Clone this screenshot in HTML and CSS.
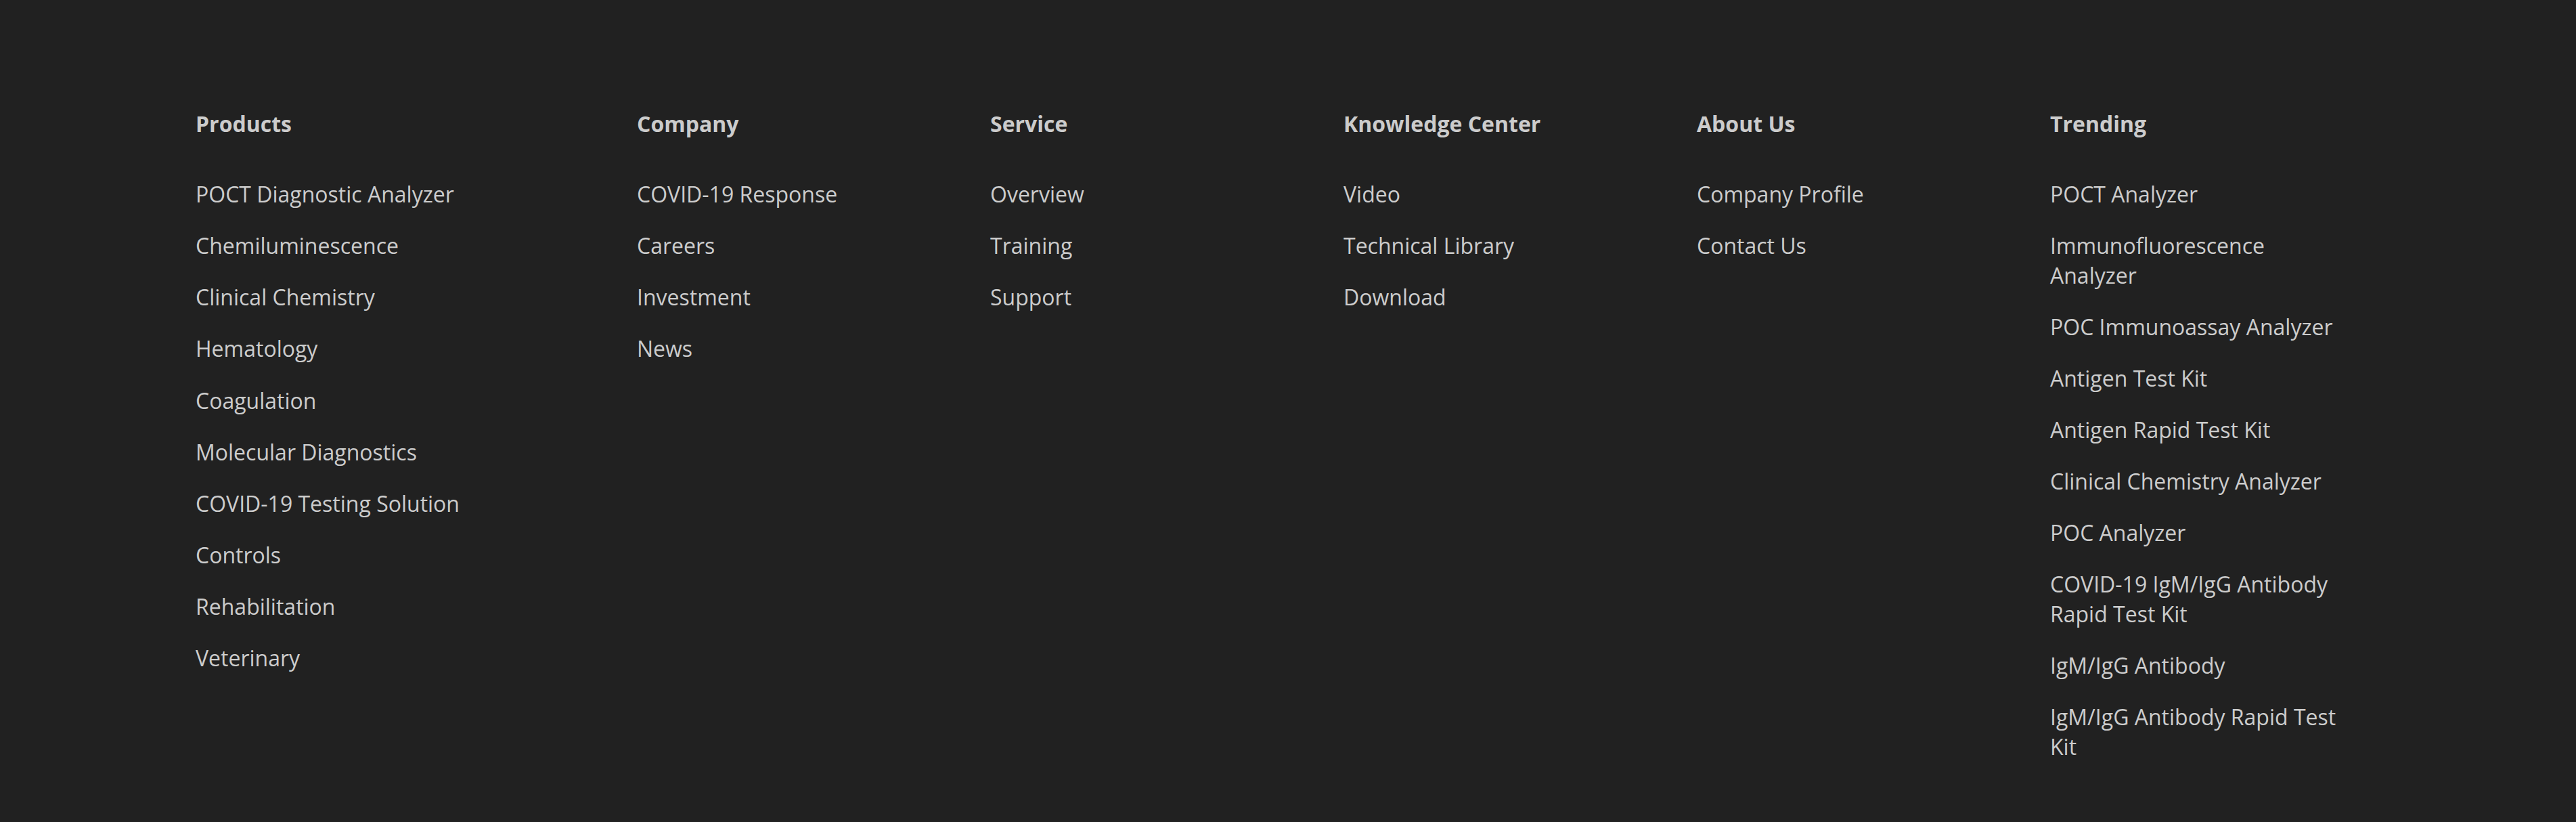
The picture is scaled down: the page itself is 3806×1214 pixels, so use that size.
FILE: index.html
```html
<!DOCTYPE html>
<html lang="en">
<head>
<meta charset="utf-8">
<title>Footer</title>
<link rel="stylesheet" href="styles.css">
</head>
<body>
<footer class="footer">
  <div class="footer-grid">
    <section class="col">
      <h3 class="col-title">Products</h3>
      <ul class="links">
        <li><a href="#">POCT Diagnostic Analyzer</a></li>
        <li><a href="#">Chemiluminescence</a></li>
        <li><a href="#">Clinical Chemistry</a></li>
        <li><a href="#">Hematology</a></li>
        <li><a href="#">Coagulation</a></li>
        <li><a href="#">Molecular Diagnostics</a></li>
        <li><a href="#">COVID-19 Testing Solution</a></li>
        <li><a href="#">Controls</a></li>
        <li><a href="#">Rehabilitation</a></li>
        <li><a href="#">Veterinary</a></li>
      </ul>
    </section>
    <section class="col">
      <h3 class="col-title">Company</h3>
      <ul class="links">
        <li><a href="#">COVID-19 Response</a></li>
        <li><a href="#">Careers</a></li>
        <li><a href="#">Investment</a></li>
        <li><a href="#">News</a></li>
      </ul>
    </section>
    <section class="col">
      <h3 class="col-title">Service</h3>
      <ul class="links">
        <li><a href="#">Overview</a></li>
        <li><a href="#">Training</a></li>
        <li><a href="#">Support</a></li>
      </ul>
    </section>
    <section class="col">
      <h3 class="col-title">Knowledge Center</h3>
      <ul class="links">
        <li><a href="#">Video</a></li>
        <li><a href="#">Technical Library</a></li>
        <li><a href="#">Download</a></li>
      </ul>
    </section>
    <section class="col">
      <h3 class="col-title">About Us</h3>
      <ul class="links">
        <li><a href="#">Company Profile</a></li>
        <li><a href="#">Contact Us</a></li>
      </ul>
    </section>
    <section class="col">
      <h3 class="col-title">Trending</h3>
      <ul class="links">
        <li><a href="#">POCT Analyzer</a></li>
        <li><a href="#">Immunofluorescence Analyzer</a></li>
        <li><a href="#">POC Immunoassay Analyzer</a></li>
        <li><a href="#">Antigen Test Kit</a></li>
        <li><a href="#">Antigen Rapid Test Kit</a></li>
        <li><a href="#">Clinical Chemistry Analyzer</a></li>
        <li><a href="#">POC Analyzer</a></li>
        <li><a href="#">COVID-19 IgM/IgG Antibody Rapid Test Kit</a></li>
        <li><a href="#">IgM/IgG Antibody</a></li>
        <li><a href="#">IgM/IgG Antibody Rapid Test Kit</a></li>
      </ul>
    </section>
  </div>
</footer>
</body>
</html>
```
FILE: styles.css
```css
html, body {
  margin: 0;
  padding: 0;
  background: #212121;
}

body {
  min-height: 100vh;
  font-family: "Open Sans", "Noto Sans", "Liberation Sans", sans-serif;
  color: #cccccc;
}

.footer {
  background: #212121;
  padding: 161px 0 90px 289px;
}

.footer-grid {
  display: grid;
  grid-template-columns: 652px 522px 522px 522px 522px 436px;
  align-items: start;
}

.col {
  display: flex;
  flex-direction: column;
}

.col-title {
  margin: 0 0 61px;
  font-size: 32px;
  line-height: 1.35;
  font-weight: 700;
  color: #cccccc;
}

.links {
  list-style: none;
  margin: 0;
  padding: 0;
  display: flex;
  flex-direction: column;
  gap: 32.5px;
}

.links a {
  display: block;
  font-size: 32px;
  line-height: 43.6px;
  color: #cccccc;
  text-decoration: none;
}
```
